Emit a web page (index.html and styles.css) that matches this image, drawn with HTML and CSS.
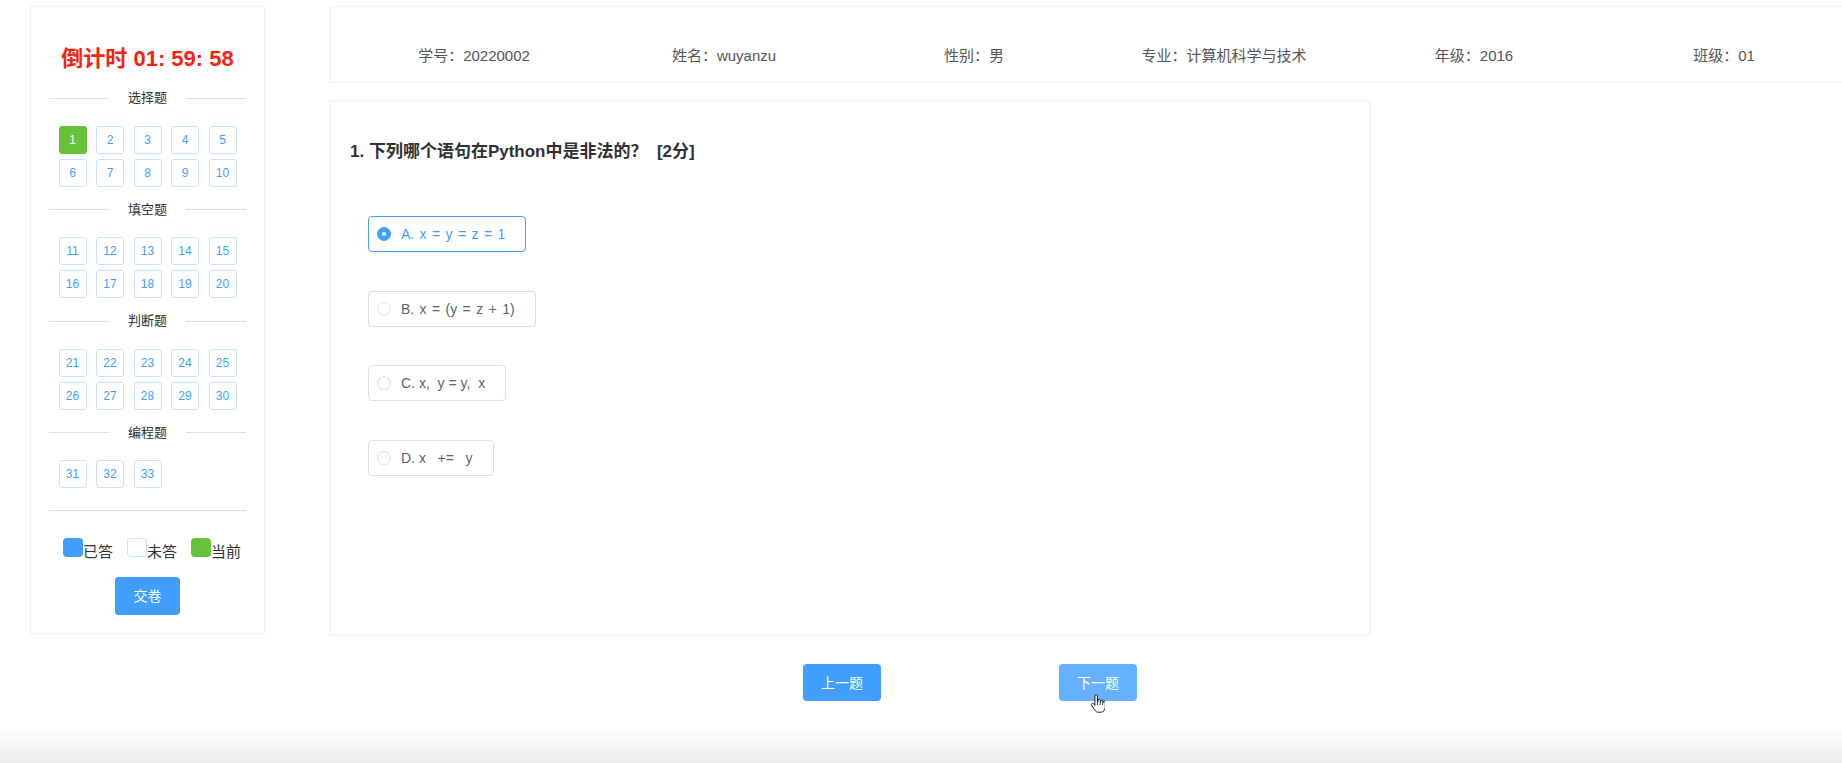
FILE: index.html
```html
<!DOCTYPE html>
<html lang="zh-CN">
<head>
<meta charset="utf-8">
<title>在线考试</title>
<link rel="stylesheet" href="styles.css">
</head>
<body>
<div class="page">
  <aside class="sidebar">
    <div class="timer">倒计时 01: 59: 58</div>

    <section class="section">
      <div class="divider"><span>选择题</span></div>
      <div class="grid">
        <span class="num current">1</span><span class="num">2</span><span class="num">3</span><span class="num">4</span><span class="num">5</span>
        <span class="num">6</span><span class="num">7</span><span class="num">8</span><span class="num">9</span><span class="num">10</span>
      </div>
    </section>

    <section class="section">
      <div class="divider"><span>填空题</span></div>
      <div class="grid">
        <span class="num">11</span><span class="num">12</span><span class="num">13</span><span class="num">14</span><span class="num">15</span>
        <span class="num">16</span><span class="num">17</span><span class="num">18</span><span class="num">19</span><span class="num">20</span>
      </div>
    </section>

    <section class="section">
      <div class="divider"><span>判断题</span></div>
      <div class="grid">
        <span class="num">21</span><span class="num">22</span><span class="num">23</span><span class="num">24</span><span class="num">25</span>
        <span class="num">26</span><span class="num">27</span><span class="num">28</span><span class="num">29</span><span class="num">30</span>
      </div>
    </section>

    <section class="section">
      <div class="divider"><span>编程题</span></div>
      <div class="grid">
        <span class="num">31</span><span class="num">32</span><span class="num">33</span>
      </div>
    </section>

    <div class="rule"></div>

    <div class="legend">
      <span class="legend-item"><i class="swatch swatch-done"></i>已答</span>
      <span class="legend-item"><i class="swatch swatch-todo"></i>未答</span>
      <span class="legend-item"><i class="swatch swatch-current"></i>当前</span>
    </div>

    <button class="btn btn-submit" type="button">交卷</button>
  </aside>

  <main class="main">
    <div class="card info">
      <div class="info-item">学号：20220002</div>
      <div class="info-item">姓名：wuyanzu</div>
      <div class="info-item">性别：男</div>
      <div class="info-item">专业：计算机科学与技术</div>
      <div class="info-item">年级：2016</div>
      <div class="info-item">班级：01</div>
    </div>

    <div class="card question">
      <h2 class="q-title">1. 下列哪个语句在Python中是非法的？&nbsp; [2分]</h2>
      <div class="options">
        <label class="opt is-checked"><span class="radio"></span><span class="opt-text">A. x = y = z = 1</span></label>
        <label class="opt"><span class="radio"></span><span class="opt-text">B. x = (y = z + 1)</span></label>
        <label class="opt"><span class="radio"></span><span class="opt-text opt-tight">C. x,&nbsp; y = y,&nbsp; x</span></label>
        <label class="opt"><span class="radio"></span><span class="opt-text opt-tight">D. x&nbsp;&nbsp; +=&nbsp;&nbsp; y</span></label>
      </div>
    </div>

    <div class="nav">
      <button class="btn nav-btn" type="button">上一题</button>
      <button class="btn nav-btn is-hover" type="button">下一题<svg class="cursor" viewBox="0 0 16 21" width="15" height="20" aria-hidden="true"><path d="M5.2 2c0-.9.6-1.5 1.4-1.5S8 1.1 8 2v6.3h.4V6.8c0-.8.6-1.3 1.3-1.3s1.3.5 1.3 1.3v1.9h.4V7.5c0-.7.6-1.2 1.2-1.2s1.2.5 1.2 1.2v1.6h.3v-.5c0-.6.5-1.1 1.1-1.1s1.1.5 1.1 1.1v5.2c0 3-2 5.5-5 5.5H8.9c-1.7 0-2.8-.7-3.7-2.1L1.7 12c-.5-.8-.3-1.7.4-2.1.7-.4 1.5-.2 2 .5l1.1 1.6z" fill="#fff" stroke="#111" stroke-width="1" stroke-linejoin="round"/><path d="M8 8.3v3.4M10.9 8.7v3M13.4 9.1v2.6" stroke="#111" stroke-width=".8" fill="none"/></svg></button>
    </div>
  </main>
</div>
<div class="screen-fade"></div>
</body>
</html>
```

FILE: styles.css
```css
html, body {
  margin: 0;
  padding: 0;
  background: #ffffff;
  overflow: hidden;
}

body {
  font-family: "Liberation Sans", "Noto Sans CJK SC", sans-serif;
  color: #606266;
  width: 1842px;
  height: 763px;
}

.page {
  display: flex;
  align-items: flex-start;
  padding: 6px 0 0 30px;
}

/* ---------- sidebar ---------- */
.sidebar {
  flex: none;
  width: 235px;
  height: 628px;
  box-sizing: border-box;
  border: 1px solid #ebeef5;
  border-radius: 2px;
  padding: 37px 18px 0 18px;
  display: flex;
  flex-direction: column;
}

.timer {
  font-size: 22px;
  font-weight: bold;
  line-height: 30px;
  color: #f3230f;
  text-align: center;
  margin-bottom: 14px;
  white-space: nowrap;
}

.section {
  margin-bottom: 13px;
}

.divider {
  display: flex;
  align-items: center;
  height: 20px;
  margin-bottom: 17.5px;
}

.divider::before,
.divider::after {
  content: "";
  flex: 1;
  height: 1px;
  background: #dcdfe6;
}

.divider span {
  padding: 0 19px;
  font-size: 13px;
  line-height: 20px;
  color: #303133;
}

.grid {
  display: grid;
  grid-template-columns: repeat(5, 28px);
  grid-auto-rows: 28px;
  column-gap: 9.5px;
  row-gap: 5px;
  justify-content: center;
}

.num {
  box-sizing: border-box;
  border: 1px solid #c6e2ff;
  border-radius: 3px;
  background: #fff;
  color: #409eff;
  font-size: 12px;
  display: flex;
  align-items: center;
  justify-content: center;
}

.num.current {
  background: #67c23a;
  border-color: #67c23a;
  color: #fff;
}

.rule {
  height: 1px;
  background: #dcdfe6;
  margin-top: 9px;
}

.legend {
  display: flex;
  align-items: baseline;
  justify-content: center;
  gap: 14px;
  margin-top: 27px;
  padding-left: 9px;
  font-size: 15px;
  line-height: 20px;
  color: #303133;
}

.legend-item {
  display: inline-flex;
  align-items: baseline;
  white-space: nowrap;
}

.swatch {
  display: inline-block;
  width: 20px;
  height: 19px;
  box-sizing: border-box;
  border-radius: 4px;
}

.swatch-done { background: #409eff; }
.swatch-todo { background: #fff; border: 1px solid #c6e2ff; }
.swatch-current { background: #67c23a; }

.btn {
  border: none;
  border-radius: 4px;
  color: #fff;
  font-family: "Liberation Sans", "Noto Sans CJK SC", sans-serif;
  font-size: 14px;
  line-height: 1;
  padding: 0;
  cursor: pointer;
}

.btn-submit {
  align-self: center;
  width: 65px;
  height: 38px;
  margin-top: 15px;
  background: #409eff;
}

/* ---------- main ---------- */
.main {
  flex: none;
  margin-left: 65px;
  display: flex;
  flex-direction: column;
  align-items: flex-start;
}

.card {
  box-sizing: border-box;
  border: 1px solid #ebeef5;
  border-radius: 2px;
  background: #fff;
}

.info {
  width: 1540px;
  height: 77px;
  padding: 39px 0 0 18px;
  display: grid;
  grid-template-columns: repeat(6, 250px);
  align-items: start;
  margin-bottom: 17px;
}

.info-item {
  font-size: 15px;
  line-height: 20px;
  color: #555;
  text-align: center;
  white-space: nowrap;
}

.question {
  width: 1041px;
  height: 536px;
  padding: 39px 19px 0 19px;
}

.q-title {
  margin: 0;
  font-size: 17px;
  font-weight: bold;
  line-height: 24px;
  color: #303133;
  white-space: nowrap;
}

.options {
  display: flex;
  flex-direction: column;
  align-items: flex-start;
  gap: 38.7px;
  margin: 52px 0 0 18px;
}

.opt {
  display: inline-flex;
  align-items: center;
  height: 36px;
  box-sizing: border-box;
  border: 1px solid #dcdfe6;
  border-radius: 4px;
  padding: 0 20px 0 8px;
  cursor: pointer;
}

.radio {
  position: relative;
  width: 14px;
  height: 14px;
  box-sizing: border-box;
  border: 1px solid #dcdfe6;
  border-radius: 50%;
  background: #fff;
  margin-right: 10px;
  flex: none;
}

.opt-text {
  font-size: 14px;
  line-height: 1;
  color: #606266;
  white-space: pre;
  word-spacing: 1.5px;
}

.opt-tight {
  word-spacing: 0;
}

.opt.is-checked {
  border-color: #409eff;
}

.opt.is-checked .radio {
  background: #409eff;
  border-color: #409eff;
}

.opt.is-checked .radio::after {
  content: "";
  position: absolute;
  left: 50%;
  top: 50%;
  width: 4px;
  height: 4px;
  margin: -2px 0 0 -2px;
  border-radius: 50%;
  background: #fff;
}

.opt.is-checked .opt-text {
  color: #409eff;
}

.nav {
  display: flex;
  gap: 178px;
  margin-top: 28px;
  padding-left: 473px;
}

.nav-btn {
  position: relative;
  width: 78px;
  height: 37px;
  background: #409eff;
}

.nav-btn.is-hover {
  background: #66b1ff;
}

.cursor {
  position: absolute;
  left: 31px;
  top: 30px;
  display: block;
}

.screen-fade {
  position: fixed;
  left: 0;
  right: 0;
  bottom: 0;
  height: 36px;
  background: linear-gradient(to bottom, rgba(236, 236, 236, 0), #ececec);
  pointer-events: none;
}
```
